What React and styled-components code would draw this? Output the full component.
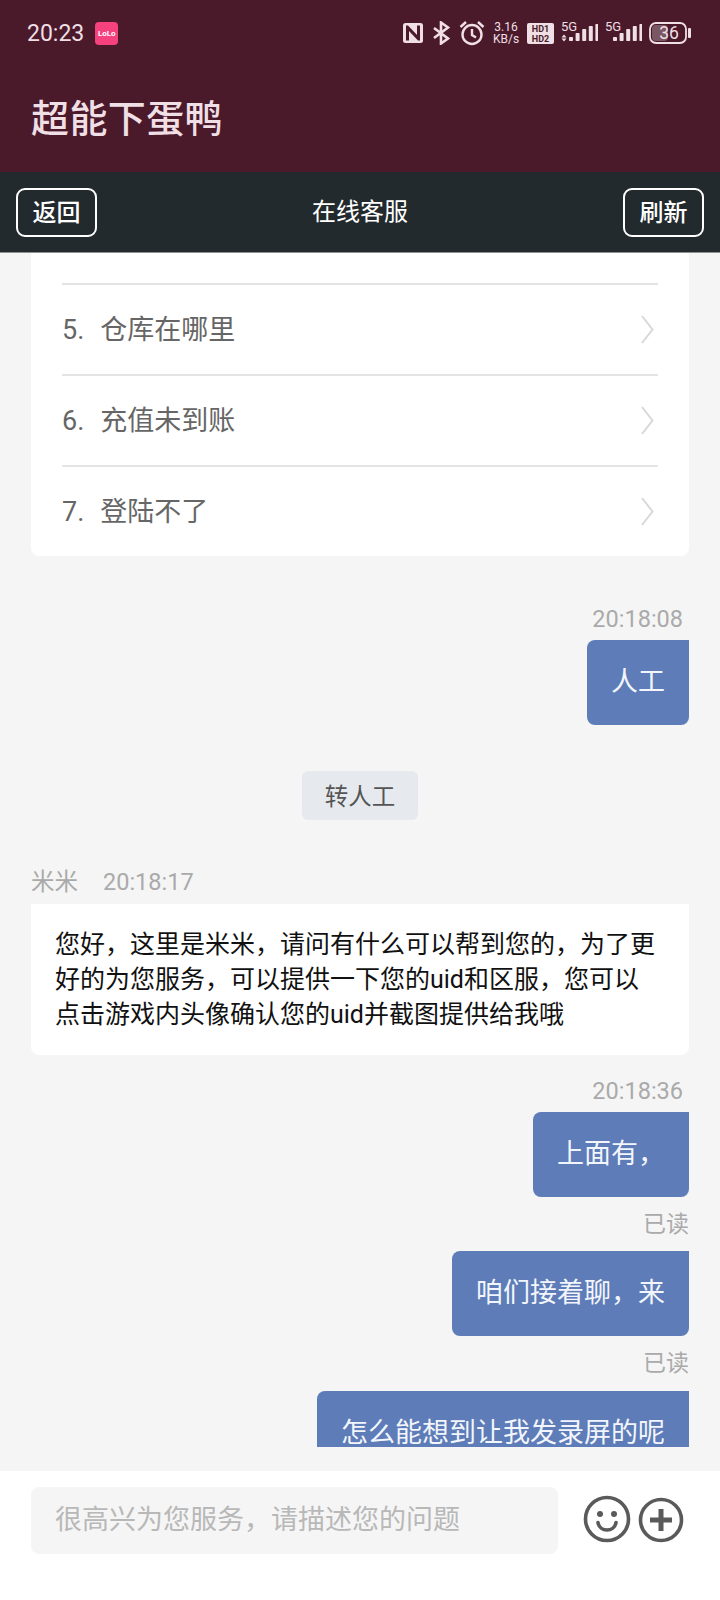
import React from 'react';
import styled, { createGlobalStyle } from 'styled-components';

const FONT = 'Roboto, "Noto Sans CJK SC", "Noto Sans", sans-serif';

const Global = createGlobalStyle`
  html, body { margin: 0; padding: 0; background: #f5f5f5; }
  * { box-sizing: border-box; }
  body { font-family: ${FONT}; }
`;

const Page = styled.div`
  width: 720px;
  height: 1600px;
  display: flex;
  flex-direction: column;
  overflow: hidden;
  background: #f5f5f5;
`;

const Header = styled.header`
  height: 172px;
  flex-shrink: 0;
  background: #4a1a2b;
  color: #f0dfe4;
  display: flex;
  flex-direction: column;
`;

const StatusBar = styled.div`
  height: 66px;
  padding: 0 29px 0 27px;
  display: flex;
  align-items: center;
  justify-content: space-between;
`;

const StatusLeft = styled.div`
  display: flex;
  align-items: center;
  gap: 11px;
`;

const Clock = styled.span`
  font-size: 23px;
  line-height: 1;
`;

const AppBadge = styled.div`
  width: 23px;
  height: 23px;
  border-radius: 4px;
  background: #f6417f;
  color: #fff;
  font-size: 8px;
  font-weight: 700;
  display: flex;
  align-items: center;
  justify-content: center;
`;

const StatusRight = styled.div`
  display: flex;
  align-items: center;
  gap: 7px;
`;

const Speed = styled.span`
  width: 28px;
  font-size: 12px;
  line-height: 12px;
  text-align: center;
  white-space: nowrap;
`;

const HdBadge = styled.span`
  width: 27px;
  height: 21px;
  border-radius: 2px;
  background: #f0dfe4;
  color: #4a1a2b;
  font-size: 9px;
  font-weight: 700;
  line-height: 10px;
  text-align: center;
  padding-top: 1px;
`;

const Title = styled.h1`
  margin: 26px 0 0;
  padding: 0 0 0 31px;
  font-size: 38px;
  font-weight: 500;
  line-height: 54px;
  letter-spacing: 0.4px;
`;

const Nav = styled.nav`
  height: 81px;
  flex-shrink: 0;
  background: #222a2e;
  border-bottom: 1px solid #8c9194;
  padding: 0 16px;
  display: flex;
  align-items: center;
  justify-content: space-between;
  color: #fff;
`;

const NavButton = styled.button`
  width: 81px;
  height: 49px;
  border: 2px solid #fff;
  border-radius: 9px;
  background: transparent;
  color: #fff;
  font-family: ${FONT};
  font-size: 24px;
  font-weight: 500;
  line-height: 1;
  padding: 2px 0 0;
`;

const NavTitle = styled.span`
  font-size: 24px;
  line-height: 1;
`;

const Chat = styled.main`
  height: 1194px;
  flex-shrink: 0;
  padding: 0 31px;
  overflow: hidden;
  display: flex;
  flex-direction: column;
`;

const Card = styled.section`
  flex-shrink: 0;
  background: #fff;
  border-radius: 0 0 8px 8px;
  padding: 30px 31px 0;
  margin-bottom: 47px;
`;

const Row = styled.div`
  height: 91px;
  border-top: 2px solid #e4e4e4;
  padding: 0 4px 5px 0;
  display: flex;
  align-items: center;
  justify-content: space-between;
  color: #666;
  font-size: 27px;
`;

const RowText = styled.span`
  display: flex;
  align-items: baseline;
  gap: 16px;
`;

const ChevronIcon = styled.svg`
  margin-top: 4px;
`;

const Meta = styled.div`
  flex-shrink: 0;
  color: #aaa;
  font-size: 23.5px;
  line-height: 32px;
  display: flex;
  gap: 25px;
  margin: ${p => p.$top || 0}px 0 ${p => p.$bottom}px;
  justify-content: ${p => (p.$left ? 'flex-start' : 'flex-end')};
  padding-right: ${p => (p.$left ? 0 : '6px')};
`;

const Bubble = styled.div`
  flex-shrink: 0;
  align-self: ${p => (p.$left ? 'stretch' : 'flex-end')};
  background: ${p => (p.$left ? '#fff' : '#5e7cb7')};
  color: ${p => (p.$left ? '#111' : '#f2f6fc')};
  font-size: ${p => (p.$left ? '25px' : '27px')};
  line-height: ${p => (p.$left ? '35px' : '39px')};
  padding: ${p => (p.$left ? '23px 28px 23px 24px' : '23px 24px')};
  border-radius: ${p => (p.$left ? '0 0 8px 8px' : '8px 0 8px 8px')};
`;

const Read = styled.div`
  flex-shrink: 0;
  text-align: right;
  color: #aaa;
  font-size: 23px;
  line-height: 32px;
  margin: 12px 0 10.5px;
`;

const SystemTag = styled.div`
  flex-shrink: 0;
  align-self: center;
  width: 116px;
  height: 49px;
  margin: 45.5px 0 46px;
  border-radius: 6px;
  background: #e6eaee;
  color: #555;
  font-size: 23.5px;
  display: flex;
  align-items: center;
  justify-content: center;
`;

const Composer = styled.footer`
  flex: 1;
  margin-top: 24px;
  background: #fff;
  padding: 16px 31px 0;
  display: flex;
  align-items: flex-start;
`;

const Input = styled.div`
  width: 527px;
  height: 67px;
  border-radius: 8px;
  background: #f5f5f5;
  color: #b8b8b8;
  font-size: 27px;
  padding: 0 24px 6px;
  display: flex;
  align-items: center;
`;

const Icons = styled.div`
  display: flex;
  align-items: flex-end;
  gap: 7px;
  margin: 8px 0 0 25px;
`;

const Chevron = () => (
  <ChevronIcon width="13" height="29" viewBox="0 0 13 29" fill="none" stroke="#d8d8d8" strokeWidth="2">
    <path d="M1 1l10.5 13.5L1 28" />
  </ChevronIcon>
);

const Signal = ({ arrows }) => (
  <svg width="37" height="32" viewBox="0 -4 37 32" fill="#f0dfe4">
    <text x="0" y="10" fontFamily="Roboto, sans-serif" fontSize="13">5G</text>
    {arrows && <path d="M0.500 16.500l2.500-3 2.500 3zM0.500 17.500l2.500 3 2.500-3z" />}
    {[4, 8, 12, 15, 17].map((h, i) => (
      <rect key={h} x={8 + i * 6.6} y={20 - h} width="4" height={h} rx="0.8" />
    ))}
  </svg>
);

const questions = [
  ['5.', '仓库在哪里'],
  ['6.', '充值未到账'],
  ['7.', '登陆不了'],
];

export default function App() {
  return (
    <Page>
      <Global />
      <Header>
        <StatusBar>
          <StatusLeft>
            <Clock>20:23</Clock>
            <AppBadge>LoLo</AppBadge>
          </StatusLeft>
          <StatusRight>
            <svg width="20" height="20" viewBox="0 0 20 20">
              <rect width="20" height="20" rx="2.5" fill="#f0dfe4" />
              <path d="M3 2.500v15h3V8l9 9.500h2V2.500h-3V12L5 2.500z" fill="#4a1a2b" />
            </svg>
            <svg width="22" height="24" viewBox="0 0 22 24" fill="none" stroke="#f0dfe4" strokeWidth="2.6">
              <path d="M4 7l14 10.500-7 5V1.500l7 5L4 17" />
            </svg>
            <svg width="26" height="26" viewBox="0 0 26 26" fill="none" stroke="#f0dfe4" strokeWidth="2.4">
              <circle cx="13" cy="14.500" r="9.500" />
              <path d="M13 9v6l4 2.500" />
              <path d="M1.500 7L7 2M24.500 7L19 2" />
            </svg>
            <Speed>3.16<br />KB/s</Speed>
            <HdBadge>HD1<br />HD2</HdBadge>
            <Signal arrows />
            <Signal />
            <svg width="42" height="22" viewBox="0 0 42 22">
              <rect x="1" y="1" width="36" height="20" rx="6" fill="none" stroke="#f0dfe4" strokeWidth="1.8" />
              <rect x="3" y="3" width="16" height="16" rx="4" fill="#7a5863" />
              <rect x="39" y="6" width="3" height="10" rx="1" fill="#f0dfe4" />
              <text x="20" y="17" textAnchor="middle" fontFamily="Roboto, sans-serif" fontSize="17.500" fill="#f0dfe4">36</text>
            </svg>
          </StatusRight>
        </StatusBar>
        <Title>超能下蛋鸭</Title>
      </Header>

      <Nav>
        <NavButton>返回</NavButton>
        <NavTitle>在线客服</NavTitle>
        <NavButton>刷新</NavButton>
      </Nav>

      <Chat>
        <Card>
          {questions.map(([n, q]) => (
            <Row key={n}>
              <RowText><span>{n}</span><span>{q}</span></RowText>
              <Chevron />
            </Row>
          ))}
        </Card>

        <Meta $bottom={5}>20:18:08</Meta>
        <Bubble>人工</Bubble>

        <SystemTag>转人工</SystemTag>

        <Meta $left $bottom={6}><span>米米</span><span>20:18:17</span></Meta>
        <Bubble $left>
          您好，这里是米米，请问有什么可以帮到您的，为了更好的为您服务，可以提供一下您的uid和区服，您可以点击游戏内头像确认您的uid并截图提供给我哦
        </Bubble>

        <Meta $top={20} $bottom={5}>20:18:36</Meta>
        <Bubble>上面有，</Bubble>
        <Read>已读</Read>
        <Bubble>咱们接着聊，来</Bubble>
        <Read>已读</Read>
        <Bubble>怎么能想到让我发录屏的呢</Bubble>
      </Chat>

      <Composer>
        <Input>很高兴为您服务，请描述您的问题</Input>
        <Icons>
          <svg width="48" height="48" viewBox="0 0 48 48" fill="none" stroke="#5a5a5a" strokeWidth="3.6">
            <circle cx="24" cy="24" r="21.500" />
            <circle cx="17" cy="19" r="3" fill="#5a5a5a" stroke="none" />
            <circle cx="31" cy="19" r="3" fill="#5a5a5a" stroke="none" />
            <path d="M15 27.500c1.500 10 16.500 10 18 0" strokeLinecap="round" />
          </svg>
          <svg width="46" height="46" viewBox="0 0 46 46" fill="none" stroke="#5a5a5a" strokeWidth="3.6">
            <circle cx="23" cy="23" r="20.500" />
            <path d="M12 23h22M23 12v22" strokeWidth="5" />
          </svg>
        </Icons>
      </Composer>
    </Page>
  );
}
